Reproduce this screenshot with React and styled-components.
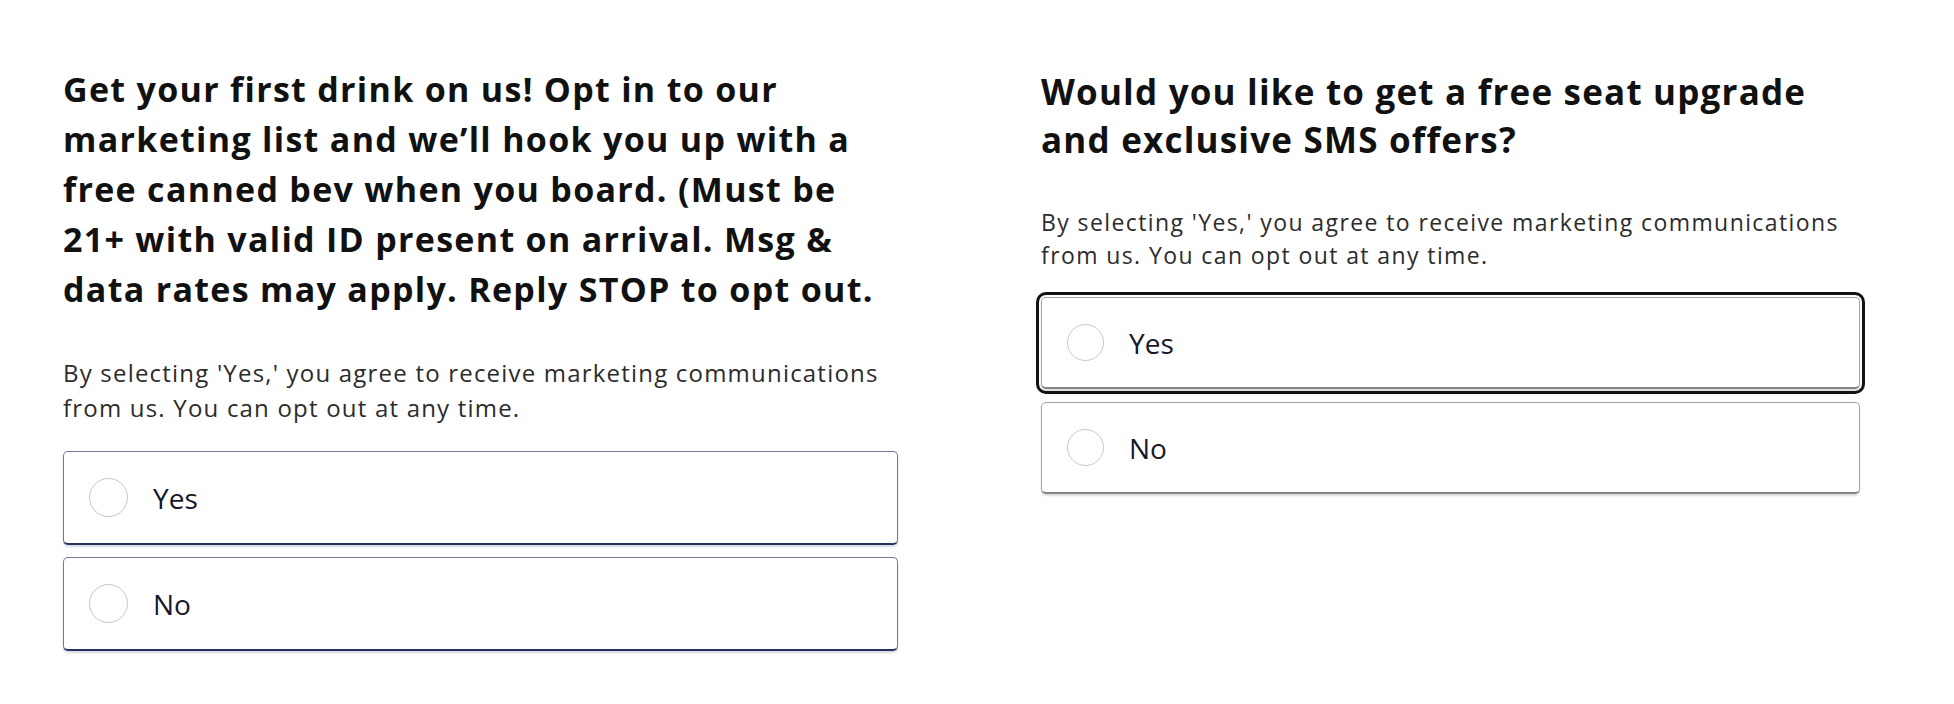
import React from "react";
import styled, { createGlobalStyle } from "styled-components";

const Global = createGlobalStyle`
  html, body { margin: 0; padding: 0; background: #ffffff; }
  body { font-family: "Open Sans", "Noto Sans", sans-serif; }
  * { box-sizing: border-box; }
`;

const Page = styled.div`
  display: flex;
  align-items: flex-start;
  gap: 143px;
  padding-left: 63px;
  width: 1954px;
  height: 704px;
  overflow: hidden;
`;

const Column = styled.section`
  display: flex;
  flex-direction: column;
  width: ${(p) => p.$width}px;
  padding-top: ${(p) => p.$top}px;
`;

const Heading = styled.h2`
  margin: 0;
  font-family: "Open Sans", "Noto Sans", sans-serif;
  font-weight: 700;
  font-size: ${(p) => p.$size}px;
  line-height: ${(p) => p.$lh}px;
  letter-spacing: ${(p) => p.$ls}px;
  color: #111111;
  white-space: nowrap;
`;

const Note = styled.p`
  margin: ${(p) => p.$mt}px 0 0 0;
  font-family: "Open Sans", "Noto Sans", sans-serif;
  font-weight: 400;
  font-size: ${(p) => p.$size}px;
  line-height: ${(p) => p.$lh}px;
  letter-spacing: ${(p) => p.$ls}px;
  color: #2c2c2c;
  white-space: nowrap;
`;

const Options = styled.div`
  display: flex;
  flex-direction: column;
  gap: ${(p) => p.$gap}px;
  margin-top: ${(p) => p.$mt}px;
`;

const Option = styled.label`
  display: flex;
  align-items: center;
  gap: 25px;
  height: ${(p) => p.$h}px;
  padding-left: 25px;
  background: #ffffff;
  border: 1px solid ${(p) => (p.$tone === "navy" ? "#737a99" : "#a3a3a3")};
  border-bottom: 2px solid ${(p) => (p.$tone === "navy" ? "#283262" : "#858585")};
  border-radius: 5px;
  box-shadow: 0 2px 2px ${(p) => (p.$tone === "navy" ? "rgba(40,50,98,0.18)" : "rgba(0,0,0,0.14)")};
  cursor: pointer;
  ${(p) =>
    p.$focused &&
    `
    outline: 3px solid #111111;
    outline-offset: 2px;
  `}
`;

const Radio = styled.span`
  flex: none;
  width: ${(p) => p.$d}px;
  height: ${(p) => p.$d}px;
  border-radius: 50%;
  border: 1.5px solid ${(p) => (p.$tone === "navy" ? "#c3c7d5" : "#c9c9c9")};
  background: #ffffff;
`;

const OptionText = styled.span`
  font-family: "Open Sans", "Noto Sans", sans-serif;
  font-size: 28px;
  font-weight: 400;
  color: #16182a;
  line-height: 1;
`;

function Choice({ label, tone, h, d, focused }) {
  return (
    <Option $tone={tone} $h={h} $focused={focused}>
      <Radio $tone={tone} $d={d} />
      <OptionText>{label}</OptionText>
    </Option>
  );
}

export default function App() {
  return (
    <>
      <Global />
      <Page>
        <Column $width={835} $top={64}>
          <Heading $size={34} $lh={50} $ls={1.3}>
            Get your first drink on us! Opt in to our
            <br />
            marketing list and we’ll hook you up with a
            <br />
            free canned bev when you board. (Must be
            <br />
            21+ with valid ID present on arrival. Msg &amp;
            <br />
            data rates may apply. Reply STOP to opt out.
          </Heading>
          <Note $mt={41} $size={24} $lh={35} $ls={1.2}>
            By selecting 'Yes,' you agree to receive marketing communications
            <br />
            from us. You can opt out at any time.
          </Note>
          <Options $gap={12} $mt={26}>
            <Choice label="Yes" tone="navy" h={94} d={39} />
            <Choice label="No" tone="navy" h={94} d={39} />
          </Options>
        </Column>
        <Column $width={819} $top={68}>
          <Heading $size={35} $lh={48} $ls={1.2}>
            Would you like to get a free seat upgrade
            <br />
            and exclusive SMS offers?
          </Heading>
          <Note $mt={42} $size={23} $lh={33} $ls={1.4}>
            By selecting 'Yes,' you agree to receive marketing communications
            <br />
            from us. You can opt out at any time.
          </Note>
          <Options $gap={13} $mt={25}>
            <Choice label="Yes" tone="grey" h={92} d={37} focused />
            <Choice label="No" tone="grey" h={92} d={37} />
          </Options>
        </Column>
      </Page>
    </>
  );
}
